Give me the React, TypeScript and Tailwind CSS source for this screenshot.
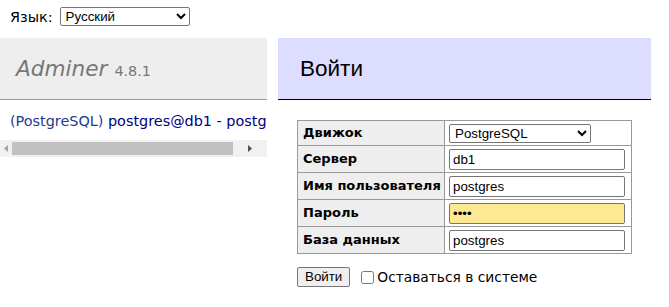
import React from 'react';

const verdana = { fontFamily: "'DejaVu Sans', Verdana, sans-serif" };

const fields = [
  { label: 'Сервер', value: 'db1', type: 'text' },
  { label: 'Имя пользователя', value: 'postgres', type: 'text' },
  { label: 'Пароль', value: 'pass', type: 'password' },
  { label: 'База данных', value: 'postgres', type: 'text' },
];

const ScrollBar: React.FC = () => (
  <div className="h-[17px] bg-[#f1f1f1] flex items-center">
    <div className="w-[12px] h-full flex items-center justify-center">
      <svg width="4" height="7" viewBox="0 0 4 7">
        <path d="M4 0 L0 3.5 L4 7 Z" fill="#a3a3a3" />
      </svg>
    </div>
    <div className="w-[221px] h-[13px] bg-[#c1c1c1]" />
    <div className="flex-1 h-full flex items-center justify-center">
      <svg width="4" height="7" viewBox="0 0 4 7">
        <path d="M0 0 L4 3.5 L0 7 Z" fill="#505050" />
      </svg>
    </div>
  </div>
);

export default function App() {
  return (
    <div className="w-[669px] h-[307px] bg-white text-black overflow-hidden text-[14.4px] leading-[18px]" style={verdana}>
      {/* language bar */}
      <div className="h-[38px] flex items-start pt-[7px] pl-[10px]">
        <span className="mt-[1px]">Язык:</span>
        <select
          defaultValue="ru"
          className="ml-[7px] w-[130px] h-[19px] border border-[#767676] rounded-[2px] bg-white text-[13.33px] pl-[1px] font-['Liberation_Sans',Arial,sans-serif]"
        >
          <option value="ru">Русский</option>
          <option value="en">English</option>
        </select>
      </div>

      <div className="flex">
        {/* menu */}
        <div className="w-[267px] shrink-0">
          <h1 className="h-[62px] bg-[#eeeeee] border-b border-[#999999] pl-[16px] pt-[17px] flex items-baseline whitespace-nowrap">
            <span className="italic text-[#777777] text-[21.6px] leading-[27px]" style={verdana}>Adminer</span>
            <span className="ml-[7px] text-[#777777] text-[14.4px]" style={verdana}>4.8.1</span>
          </h1>
          <div className="h-[40px] pl-[10px] pt-[12px] whitespace-nowrap overflow-hidden text-[#000080]">
            <span className="text-[#1c3a94]">(PostgreSQL)</span> postgres@db1 - postgres
          </div>
          <ScrollBar />
        </div>

        {/* content */}
        <div className="ml-[11px] w-[373px]">
          <h2 className="h-[62px] bg-[#ddddff] border-b border-black pl-[22px] flex items-center text-[22.5px] font-['Liberation_Sans',Arial,sans-serif]">
            Войти
          </h2>
          <div className="pl-[19px] pt-[20px]">
            <table className="border-collapse border border-[#999999] table-fixed w-[334px]">
              <colgroup>
                <col className="w-[147px]" />
                <col className="w-[187px]" />
              </colgroup>
              <tbody>
                <tr className="h-[25px]">
                  <th className="border border-[#999999] bg-[#eeeeee] text-left px-[5px] font-bold text-[13px] whitespace-nowrap">Движок</th>
                  <td className="border border-[#999999] px-[4px]">
                    <select
                      defaultValue="pgsql"
                      className="block w-[142px] h-[19px] border border-[#767676] rounded-[2px] bg-white text-[13.33px] pl-[1px] font-['Liberation_Sans',Arial,sans-serif]"
                    >
                      <option value="pgsql">PostgreSQL</option>
                      <option value="mysql">MySQL</option>
                    </select>
                  </td>
                </tr>
                {fields.map((f) => (
                  <tr key={f.label} className="h-[27px]">
                    <th className="border border-[#999999] bg-[#eeeeee] text-left px-[5px] font-bold text-[13px] whitespace-nowrap">{f.label}</th>
                    <td className="border border-[#999999] px-[4px]">
                      <input
                        type={f.type}
                        defaultValue={f.value}
                        className={`block w-[176px] h-[21px] border border-[#767676] rounded-[2px] px-[3px] text-[13.33px] font-['Liberation_Sans',Arial,sans-serif] ${
                          f.type === 'password' ? 'bg-[#fee993]' : 'bg-white'
                        }`}
                      />
                    </td>
                  </tr>
                ))}
              </tbody>
            </table>
            <div className="flex items-center mt-[13px]">
              <button className="h-[20px] px-[7px] bg-[#efefef] border border-[#767676] rounded-[2px] text-[13.33px] leading-[18px] font-['Liberation_Sans',Arial,sans-serif]">
                Войти
              </button>
              <label className="flex items-center ml-[11px]">
                <input type="checkbox" className="w-[13px] h-[13px] mr-[3px]" />
                <span className="text-[13.8px]">Оставаться в системе</span>
              </label>
            </div>
          </div>
        </div>
      </div>
    </div>
  );
}
